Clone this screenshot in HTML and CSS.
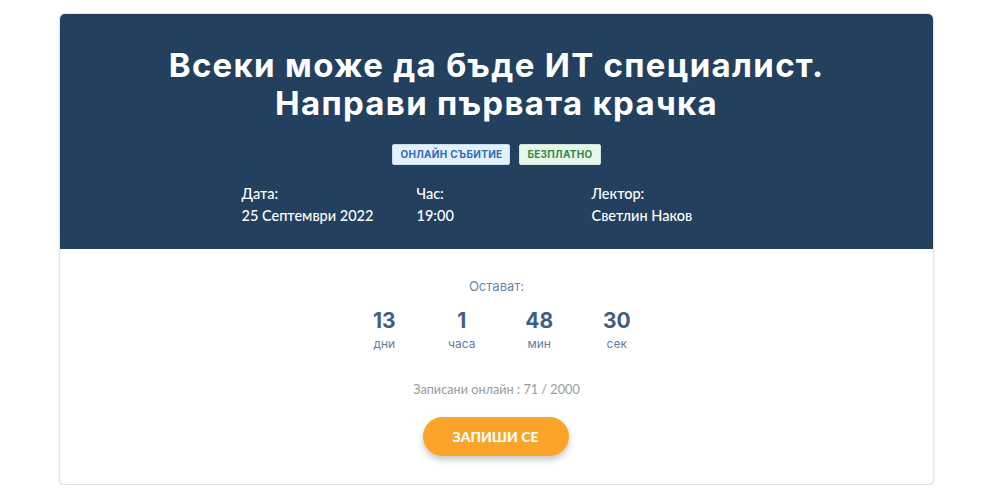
FILE: index.html
```
<!DOCTYPE html>
<html lang="bg">
<head>
<meta charset="utf-8">
<link rel="stylesheet" href="styles.css">
</head>
<body>
<div class="card">
  <div class="hero">
    <h1 class="title">Всеки може да бъде ИТ специалист.<br>Направи първата крачка</h1>
    <div class="badges">
      <span class="badge badge-blue">ОНЛАЙН СЪБИТИЕ</span>
      <span class="badge badge-green">БЕЗПЛАТНО</span>
    </div>
    <div class="details">
      <div class="detail"><div>Дата:</div><div>25 Септември 2022</div></div>
      <div class="detail"><div>Час:</div><div>19:00</div></div>
      <div class="detail"><div>Лектор:</div><div>Светлин Наков</div></div>
    </div>
  </div>
  <div class="body">
    <div class="remain">Остават:</div>
    <div class="countdown">
      <div class="unit"><div class="num">13</div><div class="lbl">дни</div></div>
      <div class="unit"><div class="num">1</div><div class="lbl">часа</div></div>
      <div class="unit"><div class="num">48</div><div class="lbl">мин</div></div>
      <div class="unit"><div class="num">30</div><div class="lbl">сек</div></div>
    </div>
    <div class="registered">Записани онлайн : 71 / 2000</div>
    <button class="btn">ЗАПИШИ СЕ</button>
  </div>
</div>
</body>
</html>
```
FILE: styles.css
```
* { box-sizing: border-box; }
html, body { margin: 0; padding: 0; background: #fff; }
body { padding: 13px 0 0 59px; font-family: "Lato", "Noto Sans", sans-serif; }
.card {
  width: 875px;
  height: 472px;
  border: 1px solid #e4e4e4;
  border-radius: 6px;
  box-shadow: 0 1px 2px rgba(0,0,0,0.12);
  overflow: hidden;
  background: #fff;
}
.hero {
  background: #23415f;
  height: 235px;
  padding-top: 32px;
  color: #fff;
  text-align: center;
}
.title {
  margin: 0;
  font-family: "Inter", "Noto Sans", sans-serif;
  font-weight: 700;
  font-size: 33px;
  line-height: 38px;
  letter-spacing: 1.3px;
}
.badges {
  margin-top: 22px;
  display: flex;
  justify-content: center;
  gap: 9px;
}
.badge {
  font-family: "Inter", sans-serif;
  font-weight: 700;
  font-size: 10px;
  line-height: 17px;
  padding: 1px 7px;
  border-radius: 2px;
  letter-spacing: 0.3px;
}
.badge-blue { background: #e4f1fc; color: #2f6db4; border: 1px solid #c9ddf0; }
.badge-green { background: #e8f5ea; color: #2f8a45; border: 1px solid #cfe7d4; }
.details {
  width: 540px;
  margin: 18px auto 0;
  padding-left: 15px;
  display: grid;
  grid-template-columns: 175px 175px 175px;
  text-align: left;
  font-size: 14.5px;
  line-height: 22px;
  font-weight: 500;
}
.body {
  text-align: center;
  padding-top: 28px;
}
.remain {
  font-family: "Inter", sans-serif;
  color: #6787aa;
  font-size: 13px;
  line-height: 18px;
}
.countdown {
  display: flex;
  justify-content: center;
  margin-top: 14px;
  padding-left: 8px;
}
.unit { width: 77.5px; }
.num {
  font-family: "Inter", sans-serif;
  font-weight: 700;
  font-size: 21px;
  line-height: 24px;
  color: #3f5f82;
}
.lbl {
  font-family: "Inter", sans-serif;
  font-size: 12px;
  line-height: 16px;
  color: #5e7fa2;
  margin-top: 3px;
}
.registered {
  margin-top: 29px;
  font-size: 12.7px;
  color: #9a9a9a;
  line-height: 16px;
}
.btn {
  margin-top: 20px;
  width: 146px;
  height: 39px;
  border: none;
  border-radius: 20px;
  background: #fba42a;
  color: #fff;
  font-family: "Lato", sans-serif;
  font-weight: 900;
  font-size: 14px;
  box-shadow: 0 4px 6px rgba(0,0,0,0.22);
  transform: translateX(-1px);
}
```
